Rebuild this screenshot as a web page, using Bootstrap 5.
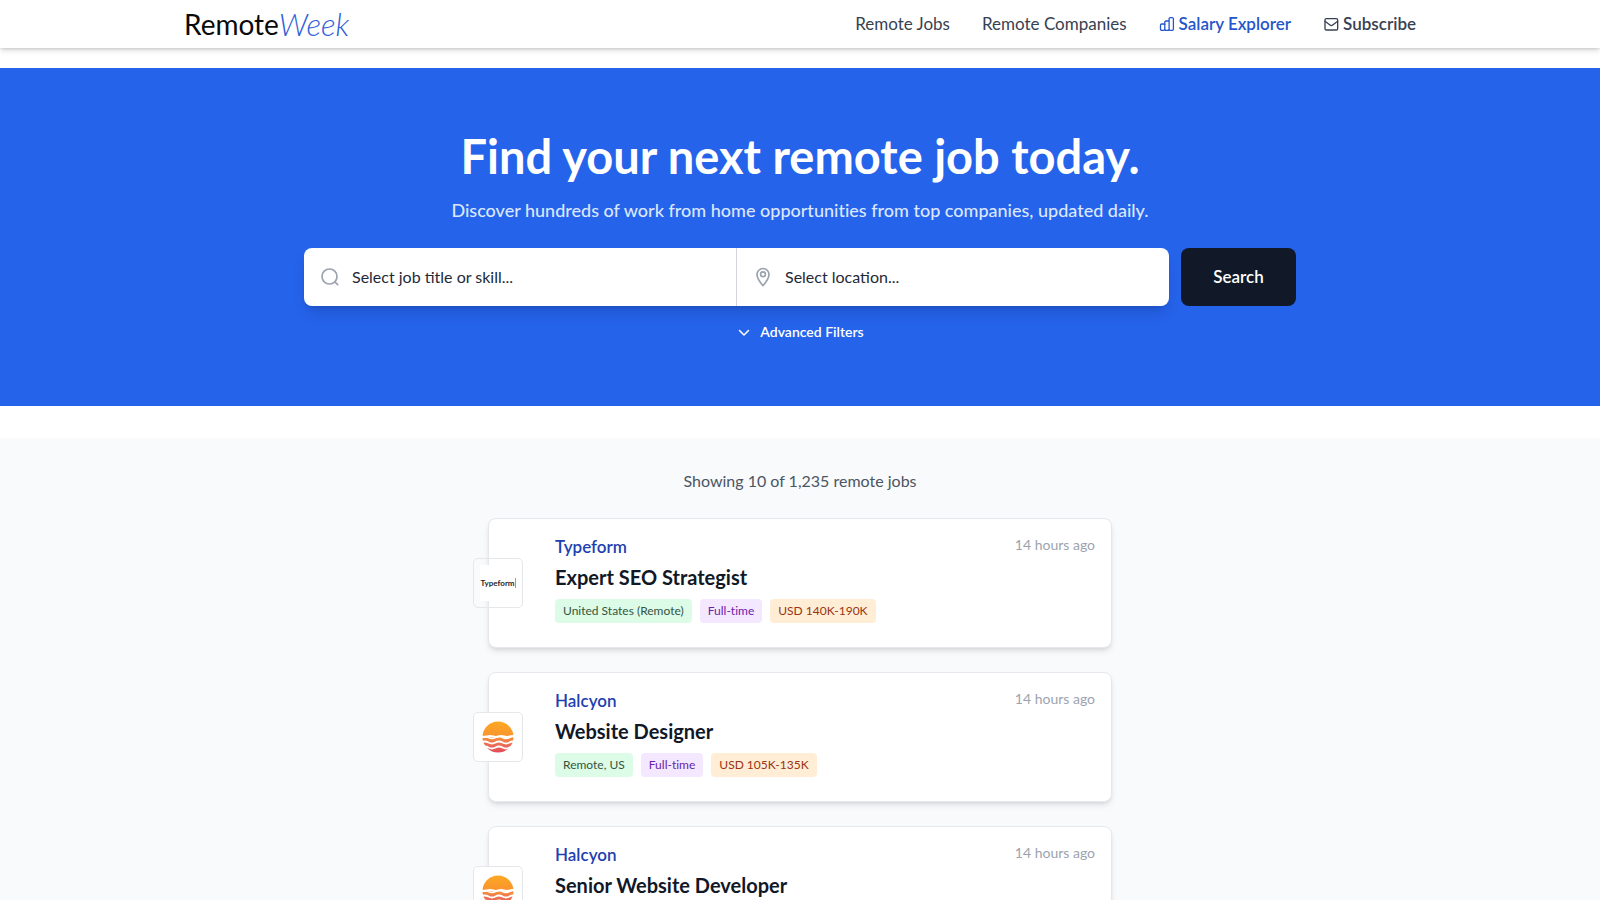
<!DOCTYPE html>
<html lang="en">
<head>
<meta charset="utf-8">
<meta name="viewport" content="width=device-width, initial-scale=1">
<title>RemoteWeek</title>
<link href="https://cdn.jsdelivr.net/npm/bootstrap@5.3.0/dist/css/bootstrap.min.css" rel="stylesheet">
<style>
  body { font-family: Lato, "Open Sans", sans-serif; font-variant-ligatures: none; color: #1f2937; background: #fff; }
  a { text-decoration: none; }
  .site-header { box-shadow: 0 1px 3px rgba(0,0,0,.15), 0 4px 6px -1px rgba(0,0,0,.1); }
  .site-width { max-width: 1280px; padding: 0 24px; height: 48px; }
  .brand-first { font: 400 28px/48px Lato, sans-serif; color: #0a0a0a; }
  .brand-second { font: italic 300 31px/48px Lato, sans-serif; color: #2f60d8; }
  .site-nav { gap: 32px; font-size: 17px; line-height: 24px; }
  .site-nav a { color: #374151; }
  .site-nav a.salary { color: #2456cb; }
  .site-nav svg { margin-right: 4px; }
  .hero { background: #2563eb; margin: 20px 0 32px; padding: 64px 16px; }
  .hero h1 { font-size: 47px; line-height: 48px; font-weight: 700; margin-bottom: 16px; }
  .hero p { font-size: 18px; line-height: 28px; font-weight: 500; color: #dbe7fe; margin-bottom: 24px; }
  .search-row { max-width: 992px; gap: 12px; }
  .fields { box-shadow: 0 10px 15px -3px rgba(0,0,0,.12), 0 4px 6px -4px rgba(0,0,0,.15); border-radius: 8px; }
  .field { background: #fff; height: 58px; padding-left: 16px; flex: 1 1 0; min-width: 0; gap: 12px; color: #9ca3af; }
  .field + .field { border-left: 1px solid #d1d5db; border-radius: 0 8px 8px 0; }
  .field:first-child { border-radius: 8px 0 0 8px; }
  .field input { font-size: 16px; line-height: 24px; min-width: 0; }
  .field input::placeholder { color: #1f2937; opacity: 1; }
  .go-btn { width: 115px; border-radius: 8px; background: #111827; color: #fff; font-size: 17px; font-weight: 600; border: 0; }
  .filters-btn { border: 0; background: none; color: #fff; font-size: 14px; line-height: 20px; font-weight: 600; padding: 0; margin-top: 16px; gap: 8px; }
  .results { background: #f9fafb; padding: 31px 16px 48px; min-height: 480px; }
  .count { font-size: 16px; line-height: 24px; color: #4b5563; margin-bottom: 25px; }
  .job-list { max-width: 624px; gap: 24px; }
  .job { min-height: 130px; background: #fff; border: 1px solid #e5e9ee; border-radius: 8px; padding: 16px 16px 24px 66px; box-shadow: 0 4px 6px -1px rgba(0,0,0,.1), 0 2px 4px -2px rgba(0,0,0,.1); }
  .company { font-size: 17px; line-height: 24px; font-weight: 600; color: #1e40af; }
  .job h2 { font-size: 20px; line-height: 28px; font-weight: 700; color: #111827; margin: 4px 0 8px; }
  .job time { font-size: 14px; line-height: 20px; color: #9ca3af; }
  .tag { font-size: 12px; line-height: 16px; padding: 4px 8px; border-radius: 4px; }
  .tag-place { background: #dcfce7; color: #35543f; }
  .tag-type { background: #f3e8ff; color: #6b21a8; }
  .tag-pay { background: #ffedd5; color: #9a3412; }
  .logo-tile { left: -16px; top: 39px; width: 50px; height: 50px; border: 1px solid #e5e7eb; border-radius: 5px; padding: 6px; }
  .logo-solid { background: #fff; }
  .typeform-mark { width: 100%; height: 36px; background: #fff; color: #262627; font: 700 8px/36px Lato, sans-serif; }
  .typeform-mark span { height: 10px; border-right: 1px solid #7fa5ad; line-height: 10px; }
</style>
</head>
<body>
<header class="site-header bg-white">
  <div class="site-width mx-auto d-flex align-items-center justify-content-between">
    <a href="#" class="d-flex text-nowrap"><span class="brand-first">Remote</span><span class="brand-second">Week</span></a>
    <nav class="site-nav d-flex align-items-center">
      <a href="#">Remote Jobs</a>
      <a href="#">Remote Companies</a>
      <a href="#" class="salary fw-semibold d-flex align-items-center"><svg width="16" height="16" viewBox="0 0 16 16" fill="none" stroke="currentColor" stroke-width="1.300" stroke-linejoin="round"><rect x="1.500" y="8" width="4.300" height="6.300" rx="1.200"/><path d="M5.800 9V6.200A1.200 1.200 0 0 1 7 5h3.100M5.800 13.100A1.200 1.200 0 0 0 7 14.300h2"/><rect x="10.100" y="1.700" width="4.300" height="12.600" rx="1.200"/><path d="M8.500 14.300h.4a1.200 1.200 0 0 0 1.200-1.200"/></svg>Salary Explorer</a>
      <a href="#" class="fw-semibold d-flex align-items-center"><svg width="16" height="16" viewBox="0 0 24 24" fill="none" stroke="currentColor" stroke-width="2" stroke-linecap="round" stroke-linejoin="round"><rect x="3" y="4" width="19" height="17" rx="2"/><path d="m3 8 7.500 5.500a3 3 0 0 0 4 0L22 8"/></svg>Subscribe</a>
    </nav>
  </div>
</header>
<main>
  <section class="hero text-center text-white">
    <h1>Find your next remote job today.</h1>
    <p>Discover hundreds of work from home opportunities from top companies, updated daily.</p>
    <form class="search-row mx-auto d-flex">
      <div class="fields d-flex flex-grow-1">
        <label class="field d-flex align-items-center">
          <svg width="20" height="20" viewBox="0 0 20 20" fill="none" stroke="currentColor" stroke-width="1.700" stroke-linecap="round"><circle cx="9.500" cy="9.500" r="7.500"/><path d="m15 15 2.700 2.700"/></svg>
          <input class="border-0 bg-transparent p-0 flex-grow-1" type="text" aria-label="Job title or skill" placeholder="Select job title or skill...">
        </label>
        <label class="field d-flex align-items-center">
          <svg width="20" height="20" viewBox="0 0 20 20" fill="none" stroke="currentColor" stroke-width="1.700" stroke-linejoin="round"><path d="M10 18.700C7 15.200 4 11.500 4 7.500a6 6 0 0 1 12 0c0 4-3 7.700-6 11.200z"/><circle cx="10" cy="7.300" r="2.400"/></svg>
          <input class="border-0 bg-transparent p-0 flex-grow-1" type="text" aria-label="Location" placeholder="Select location...">
        </label>
      </div>
      <button type="submit" class="go-btn">Search</button>
    </form>
    <div class="d-flex justify-content-center">
      <button type="button" class="filters-btn d-flex align-items-center"><svg width="16" height="16" viewBox="0 0 16 16" fill="none" stroke="currentColor" stroke-width="1.500" stroke-linecap="round" stroke-linejoin="round"><path d="m3.500 6.500 4.500 4.500 4.500-4.500"/></svg>Advanced Filters</button>
    </div>
  </section>
  <section class="results">
    <p class="count text-center">Showing 10 of 1,235 remote jobs</p>
    <div class="job-list mx-auto d-flex flex-column">
      <article class="job position-relative">
        <div class="logo-tile position-absolute"><div class="typeform-mark d-flex align-items-center justify-content-center"><span>Typeform</span></div></div>
        <div class="d-flex justify-content-between align-items-start"><a class="company" href="#">Typeform</a><time>14 hours ago</time></div>
        <h2>Expert SEO Strategist</h2>
        <div class="d-flex gap-2"><span class="tag tag-place">United States (Remote)</span><span class="tag tag-type">Full-time</span><span class="tag tag-pay">USD 140K-190K</span></div>
      </article>
      <article class="job position-relative">
        <div class="logo-tile logo-solid position-absolute d-flex">
          <svg width="36" height="36" viewBox="0 0 36 36"><defs><linearGradient id="sun" x1="0" y1="0" x2="0" y2="1"><stop offset="0" stop-color="#fda823"/><stop offset=".5" stop-color="#f9932f"/><stop offset=".65" stop-color="#ee7a50"/><stop offset="1" stop-color="#e34a5b"/></linearGradient></defs><circle cx="18" cy="18" r="15.500" fill="url(#sun)"/><g id="waves" fill="none" stroke="#fff" stroke-width="2"><path d="M1 17.500q3 1 6 0t6 0 5.500 0 5.500 0 6 0 5 0"/><path d="M1 18.500q4-2 7.500 0t7 0 7 0 7 0 6 0" stroke-width="1.500"/><path d="M1 23.500q4-2 7.500 0t7 0 7 0 7 0 6 0"/><path d="M1 28.500q4-2 7.500 0t7 0 7 0 7 0 6 0"/></g></svg>
        </div>
        <div class="d-flex justify-content-between align-items-start"><a class="company" href="#">Halcyon</a><time>14 hours ago</time></div>
        <h2>Website Designer</h2>
        <div class="d-flex gap-2"><span class="tag tag-place">Remote, US</span><span class="tag tag-type">Full-time</span><span class="tag tag-pay">USD 105K-135K</span></div>
      </article>
      <article class="job position-relative">
        <div class="logo-tile logo-solid position-absolute d-flex">
          <svg width="36" height="36" viewBox="0 0 36 36"><circle cx="18" cy="18" r="15.500" fill="url(#sun)"/><use href="#waves"/></svg>
        </div>
        <div class="d-flex justify-content-between align-items-start"><a class="company" href="#">Halcyon</a><time>14 hours ago</time></div>
        <h2>Senior Website Developer</h2>
      </article>
    </div>
  </section>
</main>
<script src="https://cdn.jsdelivr.net/npm/bootstrap@5.3.0/dist/js/bootstrap.bundle.min.js"></script>
</body>
</html>
